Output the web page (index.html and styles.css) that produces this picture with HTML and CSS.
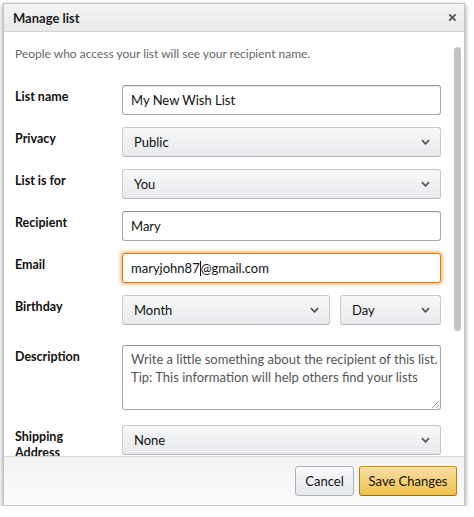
FILE: index.html
```html
<!DOCTYPE html>
<html>
<head>
<meta charset="utf-8">
<link rel="stylesheet" href="styles.css">
</head>
<body>
<div class="dialog">
  <div class="header">
    <span class="title">Manage list</span>
    <svg class="close" viewBox="0 0 10 10"><line x1="1.5" y1="1.5" x2="8.5" y2="8.5"/><line x1="8.5" y1="1.5" x2="1.5" y2="8.5"/></svg>
  </div>
  <div class="body">
    <div class="content">
      <p class="info">People who access your list will see your recipient name.</p>
      <div class="form">
        <div class="row"><label>List name</label><div class="input">My New Wish List</div></div>
        <div class="row"><label>Privacy</label><div class="select">Public<svg class="chev" viewBox="0 0 10 6"><polyline points="1,1 5,5 9,1"/></svg></div></div>
        <div class="row"><label>List is for</label><div class="select">You<svg class="chev" viewBox="0 0 10 6"><polyline points="1,1 5,5 9,1"/></svg></div></div>
        <div class="row"><label>Recipient</label><div class="input">Mary</div></div>
        <div class="row"><label>Email</label><div class="input focus">maryjohn87<span class="caret"></span>@gmail.com</div></div>
        <div class="row"><label>Birthday</label>
          <div class="pair">
            <div class="select month">Month<svg class="chev" viewBox="0 0 10 6"><polyline points="1,1 5,5 9,1"/></svg></div>
            <div class="select day">Day<svg class="chev" viewBox="0 0 10 6"><polyline points="1,1 5,5 9,1"/></svg></div>
          </div>
        </div>
        <div class="row desc"><label>Description</label><div class="textarea">Write a little something about the recipient of this list.<br>Tip: This information will help others find your lists<svg class="grip" viewBox="0 0 8 8"><line x1="1" y1="8" x2="8" y2="1"/><line x1="5" y1="8" x2="8" y2="5"/></svg></div></div>
        <div class="row"><label>Shipping<br>Address</label><div class="select">None<svg class="chev" viewBox="0 0 10 6"><polyline points="1,1 5,5 9,1"/></svg></div></div>
      </div>
    </div>
    <div class="scrollbar"><div class="thumb"></div></div>
  </div>
  <div class="footer">
    <button class="btn cancel">Cancel</button>
    <button class="btn save">Save Changes</button>
  </div>
</div>
</body>
</html>
```

FILE: styles.css
```css
html, body {
  margin: 0;
  padding: 0;
  background: #ffffff;
}
body {
  font-family: Lato, "Liberation Sans", Arial, sans-serif;
  color: #111;
}
.dialog {
  margin: 3px 0 0 3px;
  width: 460px;
  height: 501px;
  border: 1px solid #c4c4c4;
  box-shadow: 0 2px 5px rgba(0, 0, 0, 0.45);
  display: flex;
  flex-direction: column;
  background: #fff;
  overflow: hidden;
}
.header {
  height: 27px;
  flex: none;
  display: flex;
  align-items: center;
  justify-content: space-between;
  padding: 0 7px 0 9px;
  background: linear-gradient(#f4f4f4, #e9e9e9);
  border-bottom: 1px solid #d3d3d3;
}
.title {
  font-size: 13px;
  font-weight: 700;
  color: #222;
}
.close {
  width: 9px;
  height: 9px;
  stroke: #555;
  stroke-width: 2;
}
.body {
  flex: 1;
  display: flex;
  overflow: hidden;
  min-height: 0;
}
.content {
  flex: 1;
  padding: 0 13px 0 11px;
  overflow: hidden;
}
.info {
  margin: 14px 0 0 0;
  font-size: 12px;
  line-height: 15px;
  color: #666;
}
.form {
  margin-top: 24px;
  display: flex;
  flex-direction: column;
  gap: 12px;
}
.row {
  display: grid;
  grid-template-columns: 107px 319px;
  align-items: start;
}
.row label {
  font-size: 12.5px;
  font-weight: 700;
  color: #111;
  padding-top: 4px;
  line-height: 16px;
}
.row.desc {
  margin-top: 8px;
  margin-bottom: 3px;
}
.input, .select {
  box-sizing: border-box;
  height: 30px;
  border-radius: 3px;
  font-size: 13px;
  display: flex;
  align-items: center;
  color: #111;
}
.input {
  border: 1px solid #a6a6a6;
  border-top-color: #949494;
  box-shadow: inset 0 1px 0 rgba(0, 0, 0, 0.07);
  padding-left: 8px;
  background: #fff;
}
.input.focus {
  border-color: #e77600;
  box-shadow: 0 0 3px 2px rgba(228, 121, 17, 0.45);
}
.caret {
  display: inline-block;
  width: 1px;
  height: 15px;
  background: #111;
}
.select {
  border: 1px solid #c6c8cc;
  border-bottom-color: #b4b6ba;
  background: linear-gradient(#f7f8fa, #e7e9ec);
  padding: 0 10px 0 11px;
  justify-content: space-between;
}
.chev {
  width: 9px;
  height: 6px;
  fill: none;
  stroke: #555;
  stroke-width: 2;
}
.pair {
  display: flex;
  gap: 10px;
}
.month {
  width: 208px;
}
.day {
  flex: 1;
}
.textarea {
  position: relative;
  box-sizing: border-box;
  height: 65px;
  border: 1px solid #a6a6a6;
  border-top-color: #949494;
  border-radius: 3px;
  padding: 4px 8px;
  font-size: 13px;
  line-height: 18px;
  color: #555;
  white-space: nowrap;
}
.grip {
  position: absolute;
  right: 1px;
  bottom: 1px;
  width: 8px;
  height: 8px;
  stroke: #999;
  stroke-width: 1;
}
.scrollbar {
  width: 9px;
  flex: none;
  padding: 15px 1px 0 0;
}
.thumb {
  width: 7px;
  height: 284px;
  background: #c2c2c2;
  border-radius: 4px;
}
.footer {
  flex: none;
  height: 49px;
  box-sizing: border-box;
  border-top: 1px solid #d8d8d8;
  background: linear-gradient(#f3f3f3, #fbfbfb);
  display: flex;
  justify-content: flex-end;
  align-items: center;
  gap: 5px;
  padding: 0 7px 0 0;
}
.btn {
  height: 30px;
  border-radius: 3px;
  font-family: Lato, "Liberation Sans", Arial, sans-serif;
  font-size: 13px;
  color: #111;
  padding: 0;
  white-space: nowrap;
  cursor: default;
}
.cancel {
  width: 59px;
  border: 1px solid #adb1b8;
  background: linear-gradient(#f7f8fa, #e7e9ec);
}
.save {
  width: 98px;
  border: 1px solid #a88734;
  border-color: #c89411 #b0820f #99710d;
  background: linear-gradient(#f7dfa5, #f0c14b);
}
```
